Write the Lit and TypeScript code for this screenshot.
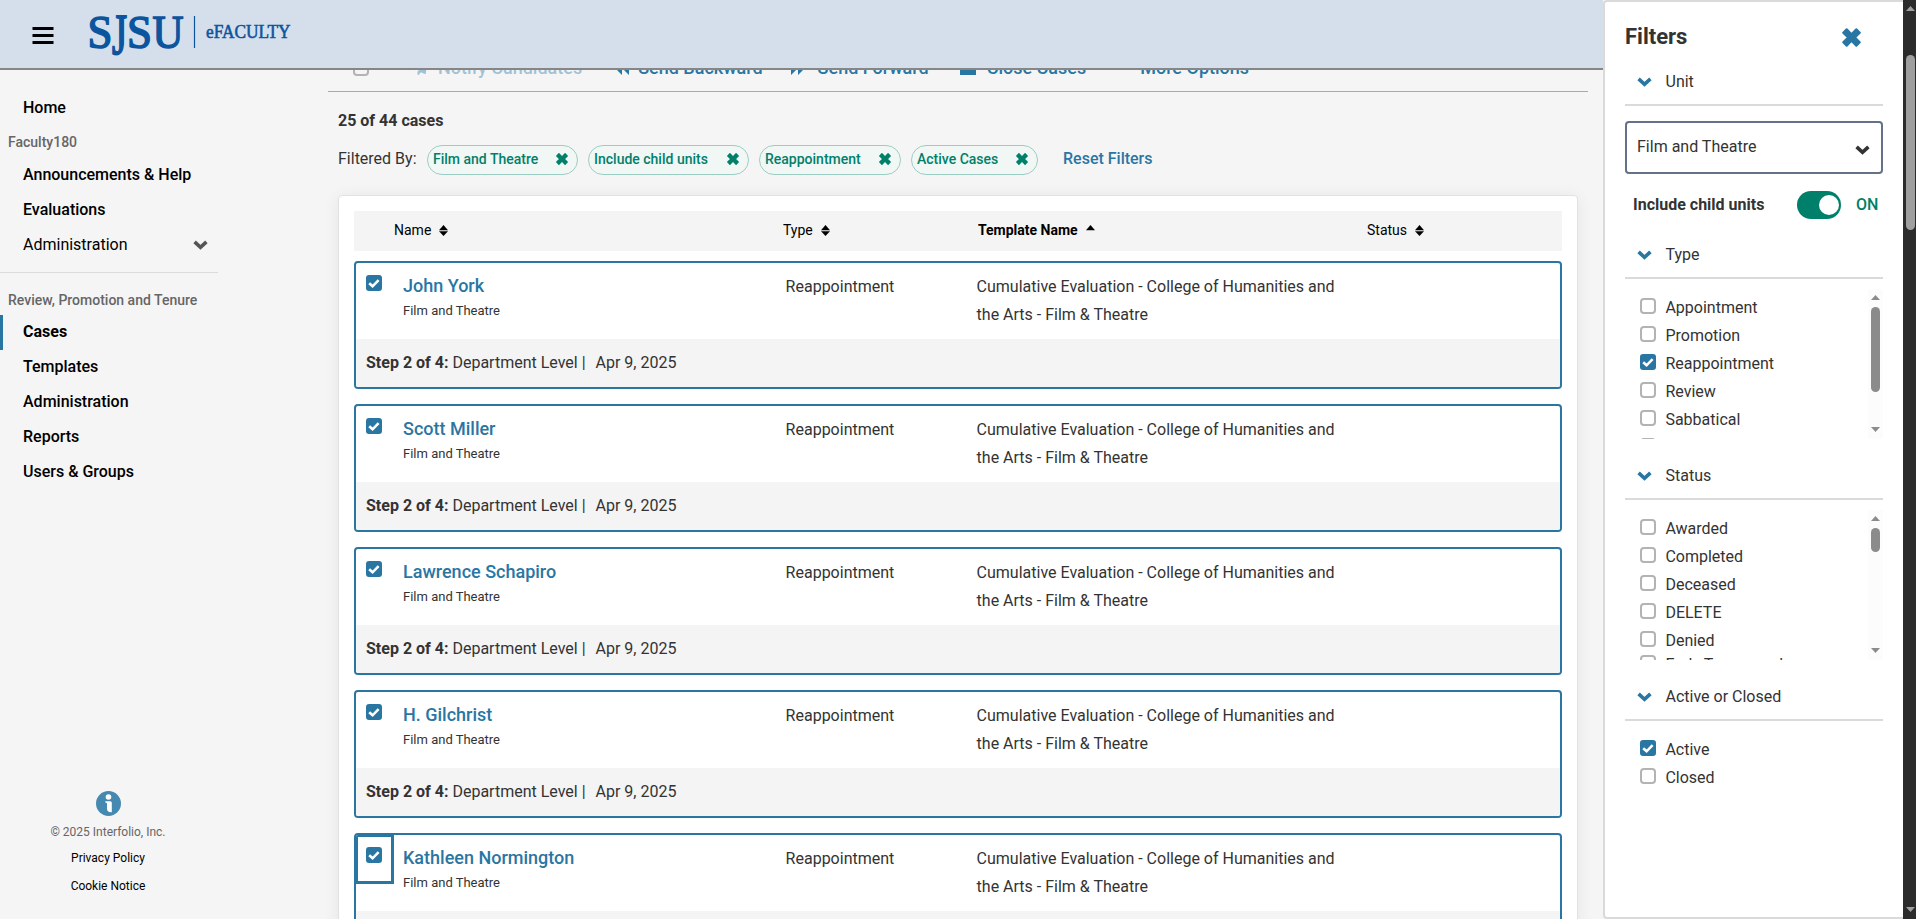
import { LitElement, html, css, svg } from "lit";
import { customElement } from "lit/decorators.js";

const cross = html`<svg class="cross" viewBox="0 0 18 18"><path d="M4.4 1.2 9 5.8 13.6 1.2 16.8 4.4 12.2 9 16.8 13.6 13.6 16.8 9 12.2 4.4 16.8 1.2 13.6 5.8 9 1.2 4.4Z" fill="currentColor" stroke="currentColor" stroke-width="2" stroke-linejoin="round"/></svg>`;
const chevron = html`<svg class="chevron" width="15" height="10" viewBox="0 0 15 10"><path d="M1.6 1.9 7.5 7.3 13.4 1.9" fill="none" stroke="currentColor" stroke-width="3.6"/></svg>`;
const up = svg`<path d="M0 5.2 4.5 0 9 5.2Z"/>`;
const sortBoth = html`<svg class="sort" width="9" height="11" viewBox="0 0 9 11">${up}<path d="M0 6.3 4.5 11 9 6.3Z"/></svg>`;
const sortUp = html`<svg class="sort" width="9" height="11" viewBox="0 0 9 11">${up}</svg>`;
const box = (on: boolean) => on
  ? html`<span class="box on"><svg width="16" height="16" viewBox="0 0 16 16"><path d="M3.2 8.2 6.6 11.3 12.6 5.2" fill="none" stroke="#fff" stroke-width="2.6"/></svg></span>`
  : html`<span class="box"></span>`;

@customElement("app-root")
export class AppRoot extends LitElement {
  static styles = css`
    :host { display: grid; grid-template-columns: 1603px 300px 13px; height: 919px; width: 1916px; overflow: hidden;
      font: 16px/28px Roboto, sans-serif; color: #333; background: #f5f5f5; }
    * { box-sizing: border-box; }
    svg { display: block; flex: none; }
    .page { display: grid; grid-template-rows: 70px 849px; min-width: 0; }
    header { background: #d5dfeb; border-bottom: 2px solid #868686; display: flex; }
    .burger { margin: 27px 0 0 32px; }
    .logo { margin-left: 35px; }
    .body { display: grid; grid-template-columns: 328px 1260px; grid-template-rows: 849px; overflow: hidden; }
    nav { padding-top: 21px; width: 218px; display: flex; flex-direction: column; color: #000; }
    .item { height: 35px; line-height: 33px; padding: 0 10px 2px 23px; font-weight: 500; display: flex; justify-content: space-between; align-items: center; }
    .item.plain { font-weight: 400; }
    .item .chevron { color: #555; }
    .item.active { border-left: 3px solid #2a76a3; padding-left: 20px; font-weight: 700; }
    .group { font-size: 14px; font-weight: 500; color: #666; padding-left: 8px; height: 32px; line-height: 32px; }
    .group.second { margin-top: 9px; border-top: 1px solid #dcdcdc; height: 43px; line-height: 54px; }
    .foot { margin-top: auto; height: 128px; display: flex; flex-direction: column; align-items: center; font-size: 12px; padding-right: 2px; }
    .foot .copy { color: #666; line-height: 20px; margin-top: 6px; }
    .foot a { line-height: 28px; }
    .foot .first { margin-top: 2px; }
    .tools { height: 22px; border-bottom: 1px solid #a9a9a9; display: flex; align-items: flex-end; padding: 0 0 7px 25px; overflow: hidden; color: #2a76a3; font-size: 18px; font-weight: 500; line-height: 32px; }
    .tools .box { margin: 0 0 8px; }
    .tools svg { margin: 0 0 9px; }
    .tool { display: flex; align-items: flex-end; gap: 10px; white-space: nowrap; flex: none; }
    .t1 { opacity: .4; margin-left: 43px; } .t2 { margin-left: 33px; gap: 9px; } .t3 { margin-left: 28px; gap: 13px; } .t4 { margin-left: 31px; gap: 11px; } .t5 { margin-left: 54px; }
    .count { font-weight: 700; margin: 15px 0 0 10px; line-height: 28px; }
    .filters { display: flex; padding-left: 10px; margin-top: 10px; height: 30px; }
    .filters .lbl { line-height: 27px; width: 89px; }
    .chip { height: 30px; border: 1px solid #9ccdc3; border-radius: 15px; background: #f1f7f5; color: #00806a; font-size: 14px; font-weight: 500; line-height: 27px; padding: 0 9px 0 5px; margin-right: 10px; display: flex; justify-content: space-between; }
    .chip .cross { width: 12px; height: 12px; margin-top: 7px; }
    .reset { color: #2a76a3; font-weight: 500; line-height: 27px; margin-left: 15px; }
    .card { margin: 20px 0 0 10px; width: 1240px; height: 900px; background: #fff; border: 1px solid #e2e2e2; border-radius: 4px; box-shadow: 0 2px 16px rgba(0,0,0,.07); padding: 15px; }
    .thead { height: 40px; background: #f4f4f4; display: grid; grid-template-columns: 389px 195px 389px auto; padding: 0 0 2px 40px; color: #000; font-size: 14px; line-height: 38px; margin-bottom: 10px; }
    .thead span { display: flex; align-items: center; gap: 8px; }
    .row { height: 128px; border: 2px solid #2a76a3; border-radius: 4px; margin-bottom: 15px; overflow: hidden; position: relative; }
    .thead .sorted { font-weight: 700; }
    .top { height: 76px; display: grid; grid-template-columns: 37px 382.6px 191px 370px; padding-left: 10px; }
    .top .box { margin-top: 12px; }
    .name { color: #2a76a3; font-size: 18px; font-weight: 500; line-height: 24px; margin-top: 11px; }
    .sub { font-size: 13px; line-height: 26px; }
    .cell { padding-top: 10px; }
    .step { background: #f4f4f4; height: 48px; line-height: 48px; padding-left: 10px; white-space: pre; }
    .date { margin-left: 2px; }
    .ring { position: absolute; left: -2px; top: -2px; width: 40px; height: 51px; border: 3px solid #2a76a3; border-left-width: 4px; border-top-width: 4px; }
    .box { display: block; width: 16px; height: 16px; border: 2px solid #b3b3b3; border-radius: 4px; background: #fff; flex: none; }
    .box.on { background: #2a76a3; border: 0; border-radius: 3px; }
    .tools .box { background: transparent; }
    aside { background: #fff; border: 2px solid #dadada; border-right: 0; border-radius: 4px 0 0 4px; padding: 0 14px 0 20px; display: flex; flex-direction: column; }
    .title { display: flex; justify-content: space-between; font-size: 22px; font-weight: 700; line-height: 28px; margin-top: 21px; padding-right: 28px; }
    .title .cross { width: 19px; height: 19px; color: #2a76a3; margin-top: 5px; }
    .sec { display: flex; align-items: center; gap: 13.5px; padding-left: 12px; border-bottom: 2px solid #dadada; width: 258px; height: 41px; margin-top: 20px; padding-bottom: 6px; flex: none; }
    .sec.s1 { margin-top: 14px; } .sec.s2 { margin-top: 19px; }
    .sec .chevron { color: #2a76a3; margin-top: 1px; }
    .select { width: 258px; height: 53px; margin-top: 15px; border: 2px solid #637288; border-radius: 4px; display: flex; align-items: center; justify-content: space-between; padding: 0 11px 2px 10px; }
    .select .chevron { margin-top: 7px; }
    .toggle { display: flex; align-items: center; margin-top: 17px; height: 28px; padding-left: 8px; font-weight: 700; line-height: 26px; }
    .toggle b { font-weight: 700; width: 164px; }
    .switch { width: 44px; height: 28px; border-radius: 14px; background: #00806a; padding: 4px 2px; display: flex; justify-content: flex-end; }
    .knob { width: 20px; height: 20px; border-radius: 50%; background: #fff; }
    .on-lbl { color: #00806a; font-weight: 500; margin-left: 15px; }
    .list { width: 258px; height: 150px; margin-top: 10px; overflow: hidden; display: flex; justify-content: space-between; flex: none; }
    .opts { padding: 4px 0 0 15px; }
    .opt { display: flex; gap: 9.4px; height: 28px; line-height: 30px; }
    .opt .box { margin-top: 5px; }
    .l2 .opt:last-child { margin-top: -4px; }
    .bar { width: 15px; background: #fcfcfc; display: flex; flex-direction: column; align-items: center; padding: 6px 0 7px; }
    .bar i { width: 9px; border-radius: 5px; background: #8b8b8b; margin-top: 7px; }
    .h1 i { height: 85px; } .h2 i { height: 24px; }
    .bar svg:last-child { margin-top: auto; }
    .scroll { background: #2b2b2b; display: flex; flex-direction: column; align-items: center; padding: 6px 0 7px 2px; }
    .scroll i { width: 9px; height: 175px; border-radius: 5px; background: #9f9f9f; margin-top: 44px; }
    .scroll svg:last-child { margin-top: auto; }
  `;

  private arrow(color: string, down = false) {
    return html`<svg width="9" height="5" viewBox="0 0 9 5"><path fill=${color} d=${down ? "M0 0H9L4.5 5Z" : "M0 5H9L4.5 0Z"}/></svg>`;
  }
  private opt(label: string, on = false) {
    return html`<div class="opt">${box(on)}<span>${label}</span></div>`;
  }
  private row(name: string, focus: boolean) {
    return html`<div class="row">
      ${focus ? html`<span class="ring"></span>` : ""}
      <div class="top">${box(true)}
        <div><div class="name">${name}</div><div class="sub">Film and Theatre</div></div>
        <div class="cell">Reappointment</div>
        <div class="cell">Cumulative Evaluation - College of Humanities and the Arts - Film &amp; Theatre</div>
      </div>
      <div class="step"><b>Step 2 of 4:</b> Department Level |  <span class="date">Apr 9, 2025</span></div>
    </div>`;
  }

  render() {
    const chips: [string, number][] = [["Film and Theatre", 151], ["Include child units", 161], ["Reappointment", 142], ["Active Cases", 127]];
    return html`
      <div class="page">
        <header>
          <svg class="burger" width="22" height="17" viewBox="0 0 22 17"><path d="M0.5 1.5H21.5M0.5 8.5H21.5M0.5 15.5H21.5" stroke="#000" stroke-width="3"/></svg>
          <svg class="logo" width="210" height="68" viewBox="0 0 210 68" fill="#0b559f" font-family="Liberation Serif, serif">
            <g stroke="#0b559f" stroke-width="1.6" font-size="47">
              <text x="-1.5" y="47.5" textLength="25" lengthAdjust="spacingAndGlyphs">S</text>
              <text x="23" y="47.5" textLength="15" lengthAdjust="spacingAndGlyphs" transform="translate(0 -3.2) scale(1 1.2)">J</text>
              <text x="38" y="47.5" textLength="25" lengthAdjust="spacingAndGlyphs">S</text>
              <text x="63.5" y="47.5" textLength="31" lengthAdjust="spacingAndGlyphs">U</text>
            </g>
            <path d="M105.5 16V48" stroke="#0b559f" stroke-width="1.2"/>
            <text x="117" y="38" font-size="19" stroke="#0b559f" stroke-width=".6" textLength="84.5" lengthAdjust="spacingAndGlyphs">eFACULTY</text>
          </svg>
        </header>
        <div class="body">
          <nav>
            <div class="item">Home</div>
            <div class="group">Faculty180</div>
            <div class="item">Announcements &amp; Help</div>
            <div class="item">Evaluations</div>
            <div class="item plain">Administration${chevron}</div>
            <div class="group second">Review, Promotion and Tenure</div>
            <div class="item active">Cases</div>
            <div class="item">Templates</div>
            <div class="item">Administration</div>
            <div class="item">Reports</div>
            <div class="item">Users &amp; Groups</div>
            <div class="foot">
              <svg width="25" height="25" viewBox="0 0 25 25"><circle cx="12.5" cy="12.5" r="12.5" fill="#4589b0"/><circle cx="12.5" cy="6" r="2.8" fill="#fff"/><path d="M9.2 10.2H14.2Q15.8 10.2 15.8 11.8V21.2Q11 21.6 11 17.5V12.2Q9.2 12 9.2 10.2Z" fill="#fff"/></svg>
              <div class="copy">© 2025 Interfolio, Inc.</div>
              <a class="first">Privacy Policy</a><a>Cookie Notice</a>
            </div>
          </nav>
          <main>
            <div class="tools">
              ${box(false)}
              <span class="tool t1"><svg width="16" height="16" viewBox="0 0 512 512" fill="currentColor"><path d="M476 3.2 12.5 270.6c-18.1 10.4-15.8 35.6 2.2 43.2L121 358.4l287.3-253.2c5.5-4.9 13.3 2.6 8.6 8.3L176 407v80.5c0 23.6 28.5 32.9 42.5 15.8L282 426l124.6 52.2c14.2 6 30.4-2.9 33-18.2l72-432C515 7.8 493.3-6.8 476 3.2z"/></svg>Notify Candidates</span>
              <span class="tool t2"><svg width="14" height="14" viewBox="0 0 14 14" fill="currentColor"><path d="M7 0V14L0 7ZM14 0V14L7 7Z"/></svg>Send Backward</span>
              <span class="tool t3"><svg width="14" height="14" viewBox="0 0 14 14" fill="currentColor"><path d="M0 0V14L7 7ZM7 0V14L14 7Z"/></svg>Send Forward</span>
              <span class="tool t4"><svg width="16" height="14" viewBox="0 0 16 14" fill="currentColor"><path d="M0 2H6L7 4H16V14H0Z"/></svg>Close Cases</span>
              <span class="tool t5">More Options</span>
            </div>
            <div class="count">25 of 44 cases</div>
            <div class="filters"><span class="lbl">Filtered By:</span>
              ${chips.map(([t, w]) => html`<span class="chip" style="width:${w}px">${t}${cross}</span>`)}
              <span class="reset">Reset Filters</span></div>
            <div class="card">
              <div class="thead"><span>Name ${sortBoth}</span><span>Type ${sortBoth}</span><span class="sorted">Template Name ${sortUp}</span><span>Status ${sortBoth}</span></div>
              ${["John York", "Scott Miller", "Lawrence Schapiro", "H. Gilchrist", "Kathleen Normington"].map((n, i) => this.row(n, i === 4))}
            </div>
          </main>
        </div>
      </div>
      <aside>
        <div class="title">Filters${cross}</div>
        <div class="sec s1">${chevron}Unit</div>
        <div class="select">Film and Theatre${chevron}</div>
        <div class="toggle"><b>Include child units</b><span class="switch"><span class="knob"></span></span><span class="on-lbl">ON</span></div>
        <div class="sec s2">${chevron}Type</div>
        <div class="list l1"><div class="opts">${["Appointment", "Promotion", "Reappointment", "Review", "Sabbatical", "Tenure"].map(t => this.opt(t, t === "Reappointment"))}</div>
          <div class="bar h1">${this.arrow("#8b8b8b")}<i></i>${this.arrow("#8b8b8b", true)}</div></div>
        <div class="sec">${chevron}Status</div>
        <div class="list l2"><div class="opts">${["Awarded", "Completed", "Deceased", "DELETE", "Denied", "Early Tenure and"].map(t => this.opt(t))}</div>
          <div class="bar h2">${this.arrow("#8b8b8b")}<i></i>${this.arrow("#8b8b8b", true)}</div></div>
        <div class="sec">${chevron}Active or Closed</div>
        <div class="list"><div class="opts">${this.opt("Active", true)}${this.opt("Closed")}</div></div>
      </aside>
      <div class="scroll">${this.arrow("#9f9f9f")}<i></i>${this.arrow("#9f9f9f", true)}</div>
    `;
  }
}
